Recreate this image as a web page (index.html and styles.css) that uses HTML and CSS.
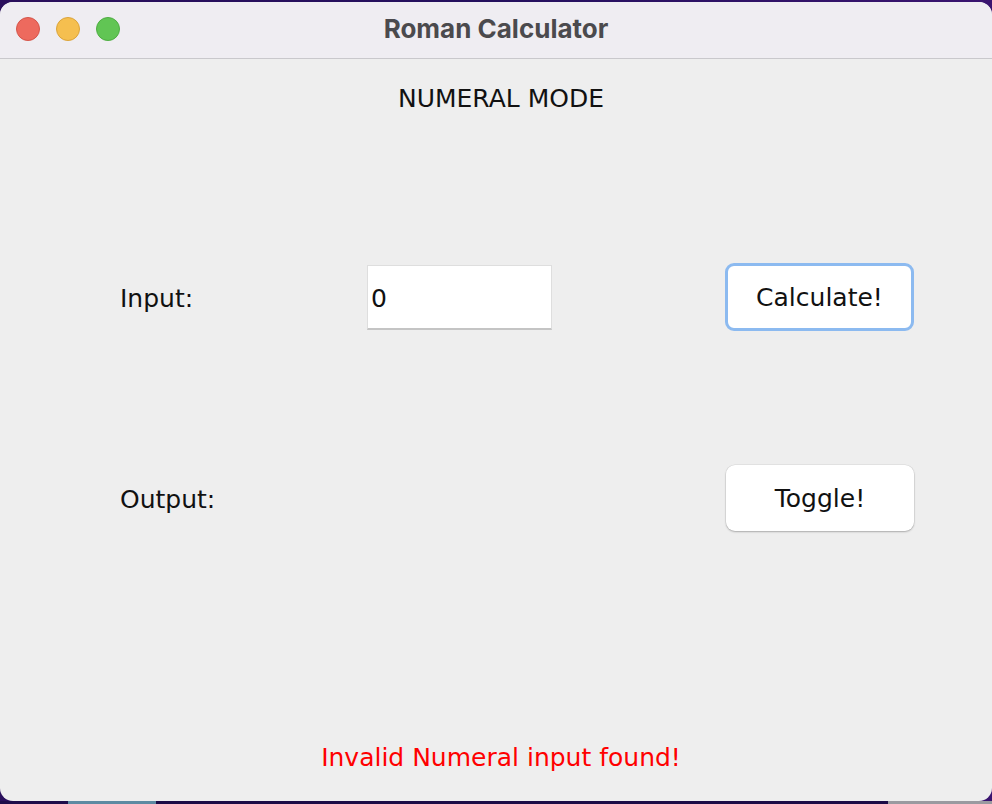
FILE: index.html
```html
<!DOCTYPE html>
<html>
<head>
<meta charset="utf-8">
<link rel="stylesheet" href="styles.css">
</head>
<body>
<div class="window">
  <div class="titlebar">
    <div class="lights">
      <span class="light red"></span>
      <span class="light yellow"></span>
      <span class="light green"></span>
    </div>
    <div class="title">Roman Calculator</div>
  </div>
  <div class="content">
    <div class="mode">NUMERAL MODE</div>
    <div class="form">
      <div class="label">Input:</div>
      <div class="field">0</div>
      <div class="spacer"></div>
      <button class="btn focused">Calculate!</button>
      <div class="label">Output:</div>
      <div class="empty"></div>
      <div class="spacer"></div>
      <button class="btn">Toggle!</button>
    </div>
    <div class="error">Invalid Numeral input found!</div>
  </div>
</div>
<div class="desk">
  <span class="seg dark1"></span>
  <span class="seg teal"></span>
  <span class="seg dark2"></span>
  <span class="seg grey"></span>
  <span class="seg dark3"></span>
</div>
</body>
</html>
```

FILE: styles.css
```css
html, body {
  margin: 0;
  padding: 0;
}
body {
  width: 992px;
  height: 804px;
  overflow: hidden;
  background: linear-gradient(90deg, #2a0f5c 0%, #24105e 50%, #3a1470 100%);
  font-family: "DejaVu Sans", sans-serif;
}
.window {
  margin-top: 2px;
  height: 799px;
  background: #eeeeee;
  border-radius: 13px;
  overflow: hidden;
  display: flex;
  flex-direction: column;
}
.titlebar {
  height: 56px;
  background: #efedf2;
  border-bottom: 1px solid #c9c8cc;
  position: relative;
  display: flex;
  align-items: center;
  justify-content: center;
}
.lights {
  position: absolute;
  left: 16px;
  top: 15px;
  display: flex;
  gap: 16px;
}
.light {
  width: 24px;
  height: 24px;
  border-radius: 50%;
  box-sizing: border-box;
}
.red { background: #ed6a5e; border: 1px solid #d5554a; }
.yellow { background: #f5bf4f; border: 1px solid #dba43a; }
.green { background: #61c554; border: 1px solid #4ead42; }
.title {
  font-family: "Inter", "Liberation Sans", sans-serif;
  font-weight: 700;
  font-size: 26px;
  color: #4b4a4d;
  margin-left: 0;
  margin-top: -3px;
}
.content {
  flex: 1;
  display: flex;
  flex-direction: column;
  padding-top: 26px;
}
.mode {
  text-align: center;
  font-size: 25px;
  line-height: 28px;
  color: #111;
  padding-left: 10px;
}
.form {
  margin-top: 150px;
  margin-left: 120px;
  display: grid;
  grid-template-columns: 247px 185px 173px 189px;
  grid-template-rows: 68px 68px;
  row-gap: 133px;
  align-items: center;
}
.label {
  font-size: 25px;
  color: #111;
  padding-top: 2px;
}
.field {
  height: 65px;
  box-sizing: border-box;
  background: #fff;
  border: 1px solid #dedede;
  border-bottom: 2px solid #c4c4c4;
  font-size: 25px;
  color: #111;
  display: flex;
  align-items: center;
  padding-left: 3px;
  padding-top: 3px;
}
.btn {
  height: 68px;
  width: 189px;
  box-sizing: border-box;
  background: #fff;
  border: none;
  border-radius: 9px;
  font-family: "DejaVu Sans", sans-serif;
  font-size: 25px;
  color: #111;
  padding: 0;
  box-shadow: 0 1px 2px rgba(0,0,0,0.25), 0 0 0 0.5px rgba(0,0,0,0.08);
}
.btn.focused {
  border: 3px solid #8cbaf0;
  box-shadow: none;
}
.form .btn:last-child {
  height: 66px;
  width: 188px;
  margin-left: 1px;
}
.error {
  margin-top: 212px;
  text-align: center;
  font-size: 25px;
  line-height: 28px;
  color: #ff0000;
  padding-left: 10px;
}
.desk {
  display: flex;
  height: 3px;
}
.seg { display: block; height: 3px; }
.dark1 { width: 68px; background: #1e0c4a; }
.teal { width: 88px; background: #5d8aa2; }
.dark2 { width: 732px; background: #1c0b46; }
.grey { width: 18px; background: #9a9aa0; }
.dark3 { flex: 1; background: #9a9aa0; }
```
